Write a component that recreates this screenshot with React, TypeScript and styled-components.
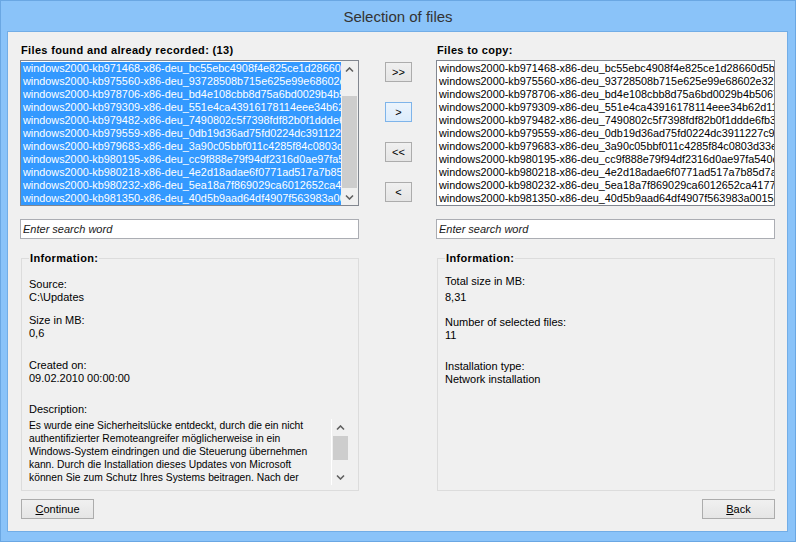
import React from 'react'
import styled, { createGlobalStyle } from 'styled-components'

const GlobalStyle = createGlobalStyle`
  html, body {
    margin: 0;
    padding: 0;
    background: #8ac3f9;
  }
  body {
    font-family: "Liberation Sans", Arial, sans-serif;
    font-size: 11px;
    color: #000;
  }
`

const Frame = styled.div`
  width: 796px;
  height: 542px;
  box-sizing: border-box;
  border: 1px solid #6aa7e3;
  background: #8ac3f9;
  display: flex;
  flex-direction: column;
`
const TitleBar = styled.div`
  height: 30px;
  display: flex;
  align-items: center;
  justify-content: center;
  font-size: 15px;
  color: #333;
`
const Client = styled.div`
  flex: 1;
  margin: 0 7px 9px 6px;
  background: #f0f0f0;
  border: 1px solid #72ade6;
  display: flex;
  flex-direction: column;
  min-height: 0;
`
const Body = styled.div`
  flex: 1;
  display: flex;
  padding: 12px 12px 0 12px;
  min-height: 0;
`
const Column = styled.div`
  width: 339px;
  display: flex;
  flex-direction: column;
`
const MidColumn = styled.div`
  flex: 1;
  display: flex;
  flex-direction: column;
  gap: 20px;
  padding: 18px 0 0 26px;
`
const Caption = styled.div`
  font-weight: bold;
  line-height: 13px;
  height: 13px;
  letter-spacing: 0.35px;
  margin-bottom: 3px;
  padding-left: 1px;
  white-space: nowrap;
`
const ListBox = styled.div`
  height: 146px;
  box-sizing: border-box;
  border: 1px solid #828790;
  background: #fff;
  display: flex;
  overflow: hidden;
`
const ListItems = styled.div`
  flex: 1;
  overflow: hidden;
  padding-top: 1px;
`
const ListItem = styled.div<{ $selected?: boolean }>`
  height: 13px;
  line-height: 13px;
  padding-left: 2px;
  font-size: 10.85px;
  white-space: nowrap;
  overflow: hidden;
  background: ${p => (p.$selected ? '#3399ff' : 'transparent')};
  color: ${p => (p.$selected ? '#fff' : '#000')};
`
const ScrollBar = styled.div<{ $divider?: boolean }>`
  width: 17px;
  flex: none;
  background: #f0f0f0;
  display: flex;
  flex-direction: column;
  border-left: ${p => (p.$divider ? '1px solid #fff' : 'none')};
`
const ScrollArrow = styled.div`
  height: 17px;
  flex: none;
  display: flex;
  align-items: center;
  justify-content: center;
`
const ScrollTrack = styled.div`
  flex: 1;
  display: flex;
  flex-direction: column;
`
const Thumb = styled.div<{ $offset: number; $size: number }>`
  margin: ${p => p.$offset}px 1px 0 1px;
  height: ${p => p.$size}px;
  background: #cdcdcd;
`
const SearchInput = styled.input`
  margin-top: 13px;
  height: 20px;
  box-sizing: border-box;
  border: 1px solid #abadb3;
  background: #fff;
  padding: 0 2px;
  font-family: "Liberation Sans", Arial, sans-serif;
  font-size: 11px;
  font-style: italic;
  outline: none;
  &::placeholder {
    color: #1a1a1a;
    font-style: italic;
  }
`
const GroupBox = styled.fieldset`
  flex: 1;
  margin: 13px 0 0 1px;
  padding: 0 7px;
  border: 1px solid #dcdcdc;
  min-width: 0;
`
const Legend = styled.legend`
  padding: 0 1px;
  font-weight: bold;
  letter-spacing: 0.35px;
  line-height: 13px;
`
const InfoLine = styled.div<{ $mt?: number }>`
  line-height: 13px;
  height: 13px;
  margin-top: ${p => p.$mt ?? 0}px;
  white-space: nowrap;
`
const DescBox = styled.div`
  margin-top: 3px;
  width: 320px;
  height: 66px;
  display: flex;
`
const DescText = styled.div`
  flex: 1;
  overflow: hidden;
  font-size: 10.3px;
`
const Button = styled.button<{ $hot?: boolean }>`
  box-sizing: border-box;
  height: 20px;
  padding: 0;
  font-family: "Liberation Sans", Arial, sans-serif;
  font-size: 11px;
  color: #000;
  border: 1px solid ${p => (p.$hot ? '#7eb4ea' : '#acacac')};
  background: ${p =>
    p.$hot
      ? 'linear-gradient(#ecf4fc, #dcecfc)'
      : 'linear-gradient(#f0f0f0, #e5e5e5)'};
  display: flex;
  align-items: center;
  justify-content: center;
`
const MoveButton = styled(Button)`
  width: 27px;
`
const DialogButton = styled(Button)`
  width: 73px;
`
const Footer = styled.div`
  display: flex;
  justify-content: space-between;
  padding: 8px 12px 12px 13px;
`

const Chevron = ({ down }: { down?: boolean }) => (
  <svg width="9" height="6" viewBox="0 0 9 6">
    <path
      d={down ? 'M1 1.5 L4.5 5 L8 1.5' : 'M1 4.5 L4.5 1 L8 4.5'}
      fill="none"
      stroke="#606060"
      strokeWidth="1.6"
    />
  </svg>
)

const FakeScroll = ({ offset, size, divider }: { offset: number; size: number; divider?: boolean }) => (
  <ScrollBar $divider={divider}>
    <ScrollArrow><Chevron /></ScrollArrow>
    <ScrollTrack>
      <Thumb $offset={offset} $size={size} />
    </ScrollTrack>
    <ScrollArrow><Chevron down /></ScrollArrow>
  </ScrollBar>
)

const files = [
  'windows2000-kb971468-x86-deu_bc55ebc4908f4e825ce1d28660d5b1',
  'windows2000-kb975560-x86-deu_93728508b715e625e99e68602e3217',
  'windows2000-kb978706-x86-deu_bd4e108cbb8d75a6bd0029b4b5067c',
  'windows2000-kb979309-x86-deu_551e4ca43916178114eee34b62d11f',
  'windows2000-kb979482-x86-deu_7490802c5f7398fdf82b0f1ddde6fb3d',
  'windows2000-kb979559-x86-deu_0db19d36ad75fd0224dc3911227c9e',
  'windows2000-kb979683-x86-deu_3a90c05bbf011c4285f84c0803d33e',
  'windows2000-kb980195-x86-deu_cc9f888e79f94df2316d0ae97fa540c1',
  'windows2000-kb980218-x86-deu_4e2d18adae6f0771ad517a7b85d7a3',
  'windows2000-kb980232-x86-deu_5ea18a7f869029ca6012652ca4177b',
  'windows2000-kb981350-x86-deu_40d5b9aad64df4907f563983a0015c8',
]

const description = [
  'Es wurde eine Sicherheitslücke entdeckt, durch die ein nicht',
  'authentifizierter Remoteangreifer möglicherweise in ein',
  'Windows-System eindringen und die Steuerung übernehmen',
  'kann. Durch die Installation dieses Updates von Microsoft',
  'können Sie zum Schutz Ihres Systems beitragen. Nach der',
]

export default function App() {
  return (
    <>
      <GlobalStyle />
      <Frame>
        <TitleBar>Selection of files</TitleBar>
        <Client>
          <Body>
            <Column>
              <Caption>Files found and already recorded: (13)</Caption>
              <ListBox>
                <ListItems>
                  {files.map(f => (
                    <ListItem $selected key={f}>{f}</ListItem>
                  ))}
                </ListItems>
                <FakeScroll offset={18} size={92} />
              </ListBox>
              <SearchInput placeholder="Enter search word" />
              <GroupBox>
                <Legend>Information:</Legend>
                <InfoLine $mt={13}>Source:</InfoLine>
                <InfoLine>C:\Updates</InfoLine>
                <InfoLine $mt={10}>Size in MB:</InfoLine>
                <InfoLine>0,6</InfoLine>
                <InfoLine $mt={19}>Created on:</InfoLine>
                <InfoLine>09.02.2010 00:00:00</InfoLine>
                <InfoLine $mt={18}>Description:</InfoLine>
                <DescBox>
                  <DescText>
                    {description.map(l => (
                      <InfoLine key={l}>{l}</InfoLine>
                    ))}
                  </DescText>
                  <FakeScroll offset={0} size={24} divider />
                </DescBox>
              </GroupBox>
            </Column>
            <MidColumn>
              <MoveButton>&gt;&gt;</MoveButton>
              <MoveButton $hot>&gt;</MoveButton>
              <MoveButton>&lt;&lt;</MoveButton>
              <MoveButton>&lt;</MoveButton>
            </MidColumn>
            <Column>
              <Caption>Files to copy:</Caption>
              <ListBox>
                <ListItems>
                  {files.map(f => (
                    <ListItem key={f}>{f}</ListItem>
                  ))}
                </ListItems>
              </ListBox>
              <SearchInput placeholder="Enter search word" />
              <GroupBox>
                <Legend>Information:</Legend>
                <InfoLine $mt={10}>Total size in MB:</InfoLine>
                <InfoLine $mt={3}>8,31</InfoLine>
                <InfoLine $mt={12}>Number of selected files:</InfoLine>
                <InfoLine>11</InfoLine>
                <InfoLine $mt={18}>Installation type:</InfoLine>
                <InfoLine>Network installation</InfoLine>
              </GroupBox>
            </Column>
          </Body>
          <Footer>
            <DialogButton><span><u>C</u>ontinue</span></DialogButton>
            <DialogButton><span><u>B</u>ack</span></DialogButton>
          </Footer>
        </Client>
      </Frame>
    </>
  )
}
